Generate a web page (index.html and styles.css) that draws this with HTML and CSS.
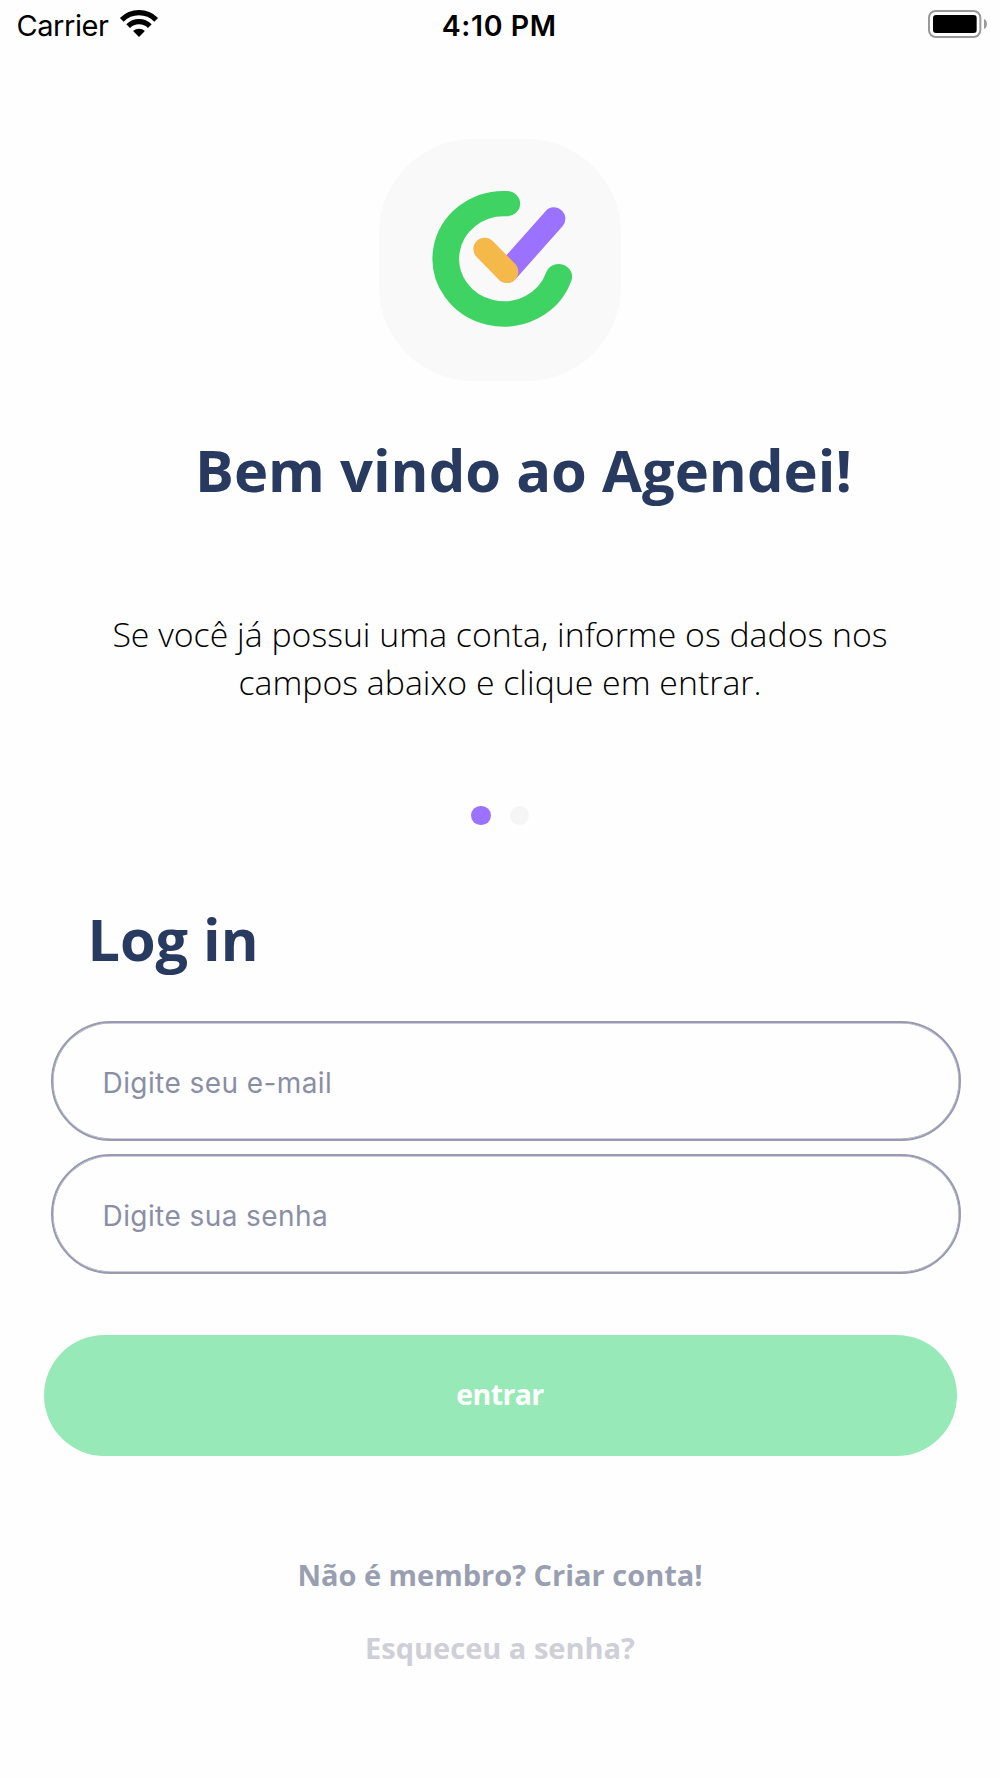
FILE: index.html
```
<!DOCTYPE html>
<html lang="pt-BR">
<head>
<meta charset="utf-8">
<title>Agendei</title>
<link rel="stylesheet" href="styles.css">
</head>
<body>
<header class="status">
  <div class="status-left">
    <span class="carrier">Carrier</span>
    <svg class="wifi" viewBox="355 27 120 87" aria-hidden="true">
      <path d="M363.4 59.4A73 73 0 0 1 466.6 59.4" fill="none" stroke="#000" stroke-width="16"/>
      <path d="M382.5 78.5A46 46 0 0 1 447.5 78.5" fill="none" stroke="#000" stroke-width="15.5"/>
      <path d="M415 111L397.3 93.3A25 25 0 0 1 432.7 93.3Z"/>
    </svg>
  </div>
  <span class="time">4:10 PM</span>
  <div class="status-right">
    <svg class="battery" viewBox="84 30 180 84" aria-hidden="true">
      <rect x="87" y="33" width="154" height="78" rx="20" fill="none" stroke="#999" stroke-width="6"/>
      <rect x="99" y="45" width="131" height="54" rx="9"/>
      <path d="M252 57C264 62 264 82 252 87Z" fill="#999"/>
    </svg>
  </div>
</header>
<main>
  <div class="logo">
    <svg viewBox="27 27 725 725" fill="none" stroke-linecap="round" aria-label="Agendei">
      <path transform="translate(400 386.5) scale(1.052 1)" d="M10 -165.5A165.5 165.5 0 1 0 158 53.4" stroke="#3fd364" stroke-width="76"/>
      <path d="M552 266L411 425" stroke="#9b72ff" stroke-width="68"/>
      <path d="M344 357L411 425" stroke="#f5b94a" stroke-width="68"/>
    </svg>
  </div>
  <h1 class="title">Bem vindo ao Agendei!</h1>
  <p class="intro">Se você já possui uma conta, informe os dados nos<br>campos abaixo e clique em entrar.</p>
  <div class="dots"><span class="dot active"></span><span class="dot"></span></div>
  <h2 class="login">Log in</h2>
  <form class="form">
    <input class="field" type="email" placeholder="Digite seu e-mail">
    <input class="field" type="password" placeholder="Digite sua senha">
    <button class="submit" type="button">entrar</button>
  </form>
  <nav class="links">
    <a class="link">Não é membro? Criar conta!</a>
    <a class="link faded">Esqueceu a senha?</a>
  </nav>
</main>
</body>
</html>
```
FILE: styles.css
```
* { box-sizing: border-box; }

body {
  margin: 0;
  height: 1778px;
  overflow: hidden;
  background: #fefefe;
  font-family: "Open Sans", "Noto Sans", sans-serif;
}

.status {
  display: grid;
  grid-template-columns: 1fr auto 1fr;
  height: 50px;
  padding: 8px 12px 0 16.5px;
  font: 400 29px/36px Inter, sans-serif;
  color: #000;
}
.status-left { display: flex; gap: 11px; }
.carrier { letter-spacing: -0.45px; }
.wifi { width: 40px; height: 29px; margin-top: 1px; }
.time { font-size: 28.5px; font-weight: 600; letter-spacing: 0.6px; margin: 0 6px 0 0; }
.status-right { display: flex; justify-content: flex-end; }
.battery { width: 60px; height: 28px; margin-top: 2px; }

.logo {
  width: 241.7px;
  height: 241.7px;
  margin: 89px auto 0;
  border-radius: 94px;
  background: #f9f9f9;
}
.logo svg { display: block; width: 100%; height: 100%; }

.title, .login {
  color: #283a60;
  font-size: 57.9px;
  font-weight: 700;
  line-height: 80px;
}
.title { margin: 49.8px 0 0 195px; white-space: nowrap; }
.intro {
  margin: 99.6px 0 0;
  color: #000;
  font-size: 33.85px;
  font-weight: 300;
  line-height: 48px;
  text-align: center;
}

.dots { display: flex; justify-content: center; gap: 19px; margin-top: 99.5px; }
.dot { width: 19.6px; height: 19.6px; border-radius: 50%; background: #f5f5f5; }
.dot.active { background: #9b72ff; }

.login { margin: 73.4px 0 0 87.4px; font-size: 57.6px; }

.form { display: flex; flex-direction: column; margin-top: 42px; padding: 0 39px 0 51px; }
.field {
  height: 120.5px;
  margin-bottom: 12.5px;
  padding: 4px 50px 0 49.5px;
  border: 2px solid #989ab0;
  border-radius: 61px;
  box-shadow: inset 0 0 0 0.5px #989ab0;
  background: transparent;
  font: 400 28px Inter, sans-serif;
  letter-spacing: 0.42px;
}
.field::placeholder { color: #8a8ea5; opacity: 1; }
.submit {
  height: 121px;
  margin: 48px 4.5px 0 -7.5px;
  padding: 0 0 2px;
  border: 0;
  border-radius: 60.5px;
  background: #97eab8;
  color: #fff;
  font: 700 28.5px "Open Sans", sans-serif;
  letter-spacing: -0.6px;
}

.links { display: flex; flex-direction: column; align-items: center; gap: 32.5px; margin-top: 99.6px; }
.link { color: #9a9eb1; font-size: 29px; font-weight: 700; line-height: 40px; }
.link.faded { color: #cfcfd8; }
```
